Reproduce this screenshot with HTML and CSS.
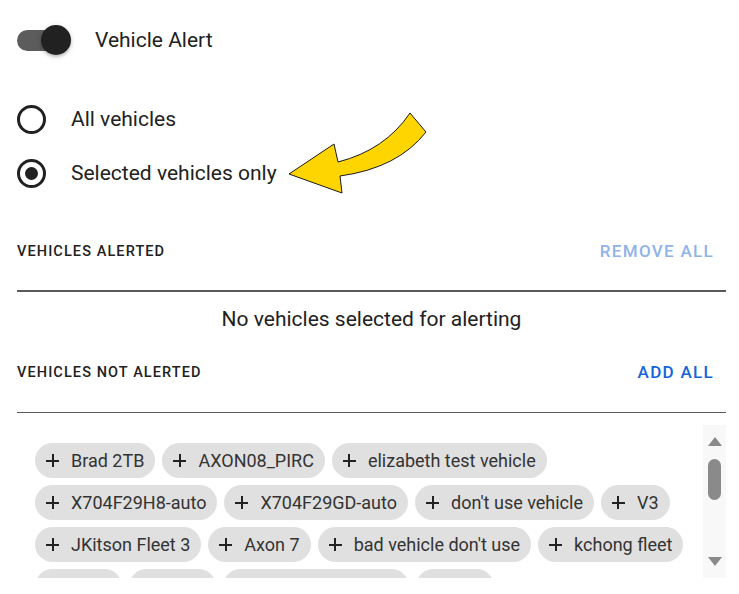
FILE: index.html
```html
<!DOCTYPE html>
<html>
<head>
<meta charset="utf-8">
<link rel="stylesheet" href="styles.css">
</head>
<body>
<div class="panel">
  <div class="toggle-row">
    <span class="switch"><span class="track"></span><span class="thumb"></span></span>
    <span class="toggle-label">Vehicle Alert</span>
  </div>
  <div class="radios">
    <div class="radio-row"><span class="radio"></span><span class="radio-label">All vehicles</span></div>
    <div class="radio-row"><span class="radio checked"><span class="dot"></span></span><span class="radio-label">Selected vehicles only</span></div>
  </div>
  <div class="section-head first">
    <span class="section-title">VEHICLES ALERTED</span>
    <span class="action disabled">REMOVE ALL</span>
  </div>
  <div class="divider thick"></div>
  <div class="empty">No vehicles selected for alerting</div>
  <div class="section-head second">
    <span class="section-title">VEHICLES NOT ALERTED</span>
    <span class="action">ADD ALL</span>
  </div>
  <div class="divider"></div>
  <div class="scroll-box">
    <div class="chips">
      <span class="chip"><span class="plus"></span>Brad 2TB</span>
      <span class="chip"><span class="plus"></span>AXON08_PIRC</span>
      <span class="chip"><span class="plus"></span>elizabeth test vehicle</span>
      <span class="chip"><span class="plus"></span>X704F29H8-auto</span>
      <span class="chip"><span class="plus"></span>X704F29GD-auto</span>
      <span class="chip"><span class="plus"></span>don't use vehicle</span>
      <span class="chip"><span class="plus"></span>V3</span>
      <span class="chip"><span class="plus"></span>JKitson Fleet 3</span>
      <span class="chip"><span class="plus"></span>Axon 7</span>
      <span class="chip"><span class="plus"></span>bad vehicle don't use</span>
      <span class="chip"><span class="plus"></span>kchong fleet</span>
      <span class="chip stub w87"></span>
      <span class="chip stub w87"></span>
      <span class="chip stub w186"></span>
      <span class="chip stub w78"></span>
    </div>
    <div class="scrollbar">
      <span class="arrow up"></span>
      <span class="sb-thumb"></span>
      <span class="sb-space"></span>
      <span class="arrow down"></span>
    </div>
  </div>
  <svg class="pointer" width="739" height="594" viewBox="0 0 739 594">
    <path d="M289,174 L334,144 L338,162 Q385,150 410,113 L426,132 Q398,168 340,176 L342,193 Z" fill="#FFD500" stroke="#1a1a1a" stroke-width="1" stroke-linejoin="miter"/>
  </svg>
</div>
</body>
</html>
```

FILE: styles.css
```css
* { box-sizing: border-box; }
html, body {
  margin: 0;
  padding: 0;
  background: #ffffff;
}
body {
  font-family: Roboto, "Liberation Sans", Arial, sans-serif;
  color: #212121;
}
.panel {
  position: relative;
  width: 739px;
  height: 594px;
  padding: 0 13px 0 17px;
  overflow: hidden;
}
.toggle-row {
  height: 80px;
  display: flex;
  align-items: center;
  gap: 24px;
}
.switch {
  position: relative;
  width: 54px;
  height: 30px;
  flex: none;
}
.track {
  position: absolute;
  left: 0;
  top: 5px;
  width: 50px;
  height: 21px;
  border-radius: 11px;
  background: #5c5c5c;
}
.thumb {
  position: absolute;
  left: 24px;
  top: 0;
  width: 30px;
  height: 30px;
  border-radius: 50%;
  background: #212121;
  box-shadow: 0 2px 3px rgba(0,0,0,0.2), 0 1px 6px rgba(0,0,0,0.12);
}
.toggle-label {
  font-size: 21px;
  color: #212121;
}
.radios {
  margin-top: 12px;
  display: flex;
  flex-direction: column;
}
.radio-row {
  height: 54px;
  display: flex;
  align-items: center;
  gap: 25px;
}
.radio {
  width: 29px;
  height: 29px;
  border-radius: 50%;
  border: 3px solid #212121;
  display: flex;
  align-items: center;
  justify-content: center;
  flex: none;
}
.dot {
  width: 13px;
  height: 13px;
  border-radius: 50%;
  background: #212121;
}
.radio-label {
  font-size: 21px;
  color: #212121;
}
.section-head {
  display: flex;
  align-items: center;
  justify-content: space-between;
  height: 50px;
  padding-right: 12px;
}
.section-head.first {
  margin-top: 26px;
}
.section-head.second {
  height: 52px;
}
.section-title {
  font-size: 14.5px;
  font-weight: 500;
  letter-spacing: 1.1px;
  color: #212121;
}
.action {
  font-size: 17px;
  font-weight: 500;
  letter-spacing: 1.3px;
  color: #1565d8;
}
.action.disabled {
  color: #8fb3ea;
}
.divider {
  height: 1px;
  background: #5a5a5a;
  margin-top: 14px;
}
.divider.thick {
  height: 2px;
  margin-top: 14px;
}
.empty {
  height: 54px;
  display: flex;
  align-items: center;
  justify-content: center;
  font-size: 21px;
  color: #212121;
}
.scroll-box {
  margin-top: 12px;
  height: 153px;
  display: flex;
}
.chips {
  flex: 1;
  overflow: hidden;
  display: flex;
  flex-wrap: wrap;
  align-content: flex-start;
  gap: 7px;
  padding: 18px 0 0 18px;
}
.chip {
  height: 35px;
  border-radius: 18px;
  background: #e0e0e0;
  display: inline-flex;
  align-items: center;
  padding: 0 11px 0 11px;
  font-size: 18px;
  color: #333333;
  white-space: nowrap;
}
.chip.stub { padding: 0; }
.w87 { width: 87px; }
.w186 { width: 186px; }
.w78 { width: 78px; }
.plus {
  position: relative;
  width: 13px;
  height: 13px;
  margin-right: 12px;
  flex: none;
}
.plus::before, .plus::after {
  content: "";
  position: absolute;
  background: #222222;
}
.plus::before {
  left: 0;
  top: 5.5px;
  width: 13px;
  height: 2px;
}
.plus::after {
  left: 5.5px;
  top: 0;
  width: 2px;
  height: 13px;
}
.scrollbar {
  width: 23px;
  flex: none;
  background: #f8f8f8;
  display: flex;
  flex-direction: column;
  align-items: center;
  padding: 12px 0 12px;
}
.arrow {
  width: 0;
  height: 0;
  border-left: 7px solid transparent;
  border-right: 7px solid transparent;
}
.arrow.up {
  border-bottom: 9px solid #8a8a8a;
}
.arrow.down {
  border-top: 9px solid #8a8a8a;
}
.sb-thumb {
  margin-top: 13px;
  width: 13px;
  height: 41px;
  border-radius: 7px;
  background: #8a8a8a;
}
.sb-space {
  flex: 1;
}
.pointer {
  position: absolute;
  left: 0;
  top: 0;
  pointer-events: none;
}
```
